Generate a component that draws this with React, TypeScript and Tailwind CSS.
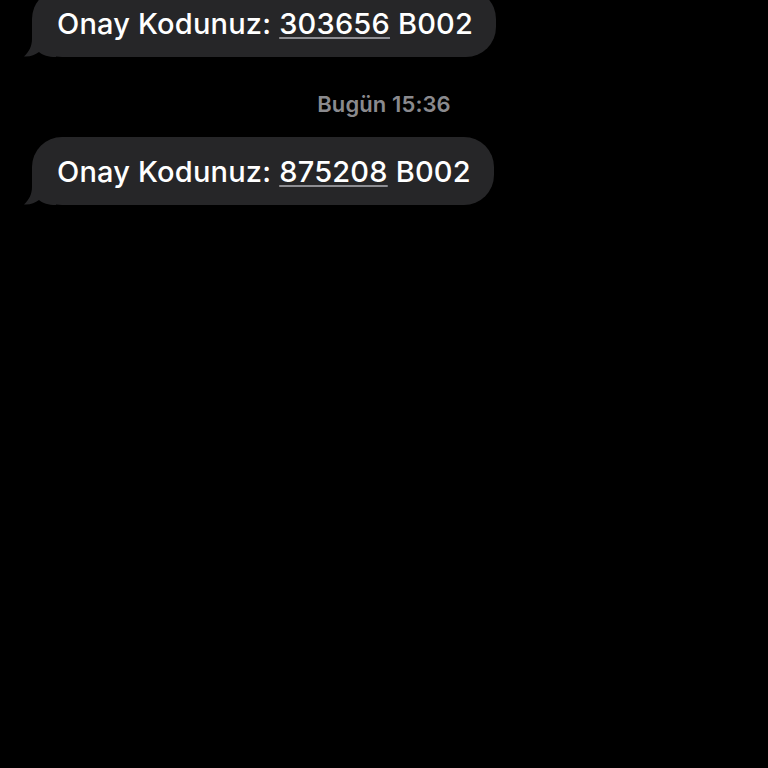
import React from 'react';

// Incoming message bubble with the iMessage-style tail at bottom-left
function Bubble({ code }: { code: string }) {
  return (
    <div className="relative self-start ml-[32px] h-[68px] flex items-center rounded-[30px] bg-[#262628] pl-[25px] pr-[23px]">
      <svg
        className="absolute left-[-10px] bottom-0"
        width="34"
        height="30"
        viewBox="0 0 34 30"
      >
        <path
          d="M10 0 L10 12 C10 19 7 25 2 29.5 C8 30 13 28 17 25 C21 28.5 26 30 34 30 L34 0 Z"
          fill="#262628"
        />
      </svg>
      <span className="relative text-[29px] leading-none font-medium text-white tracking-[0.2px]">
        Onay Kodunuz:{' '}
        <span className="underline decoration-[#8e8e93] decoration-2 underline-offset-[3px]">
          {code}
        </span>{' '}
        B002
      </span>
    </div>
  );
}

export default function App() {
  return (
    <div
      className="w-[768px] h-[768px] bg-black overflow-hidden"
      style={{ fontFamily: 'Inter, "Noto Sans", sans-serif' }}
    >
      <div className="flex flex-col mt-[-11px]">
        <Bubble code="303656" />
        <div className="h-[80px] pt-[35px] flex justify-center">
          <span className="text-[22px] leading-[24px] font-semibold text-[#8a8a8e] tracking-[0.1px]">
            Bugün 15:36
          </span>
        </div>
        <Bubble code="875208" />
      </div>
    </div>
  );
}
